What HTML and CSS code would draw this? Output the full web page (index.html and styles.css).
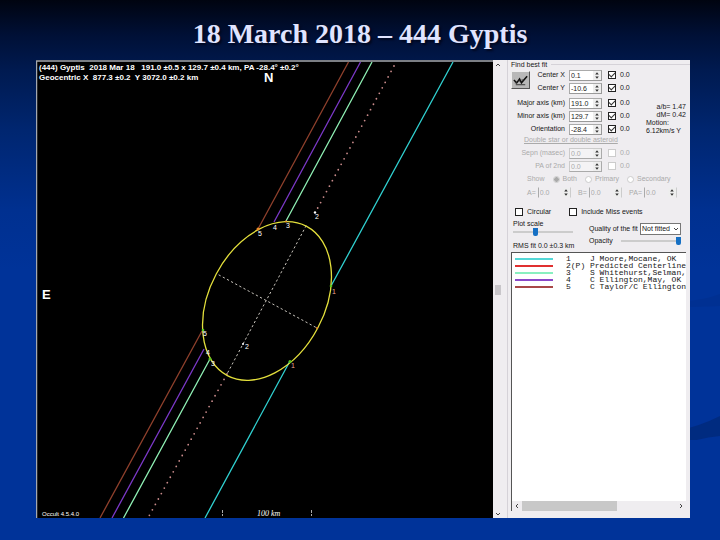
FILE: index.html
```html
<!DOCTYPE html>
<html lang="en">
<head>
<meta charset="utf-8">
<title>18 March 2018 – 444 Gyptis</title>
<link rel="stylesheet" href="styles.css">
</head>
<body>
<svg class="swoosh" viewBox="0 0 40 200" aria-hidden="true">
  <path d="M0 62 Q25 60 40 54 V66 Q20 67 0 67Z" fill="#002d8c" opacity=".5"/>
  <path d="M0 190 Q20 186 40 176 V196 Q20 198 0 205Z" fill="#002b80"/>
</svg>
<h1>18 March 2018 – 444 Gyptis</h1>
<main class="window">
  <svg class="plot" viewBox="36 60 457 458" role="img" aria-label="Occultation chords and fitted ellipse">
    <rect x="36" y="60" width="457" height="458" fill="#000"/>
    <path d="M36.500 518V61H493" fill="none" stroke="#a4a8b0" stroke-width="1.500"/>
    <g fill="none" stroke-width="1.300">
      <path stroke="#8f402c" d="M348.500 62L258 229M202 331L100 518"/>
      <path stroke="#7b38c8" d="M360.500 62L274 222M204 349L112 518"/>
      <path stroke="#8ff0b4" d="M372 62L286 221M210 359L123.500 518"/>
      <path stroke="#30d0d0" d="M453 62L331 286M290 361L205 518"/>
    </g>
    <g fill="none" stroke-linecap="round">
      <path stroke="#c88a8a" stroke-width="1.800" stroke-dasharray="0 6.200" d="M394 66L315 213M227 374L149 516"/>
      <path stroke="#c8c4bc" stroke-width="1" stroke-dasharray="1.500 3.200" d="M306 226L227 374M219 275L317 328"/>
    </g>
    <ellipse cx="267" cy="301" rx="57.500" ry="84.500" transform="rotate(28 267 301)" fill="none" stroke="#e4e03c" stroke-width="1.300"/>
    <g fill="#58c820">
      <circle cx="331" cy="286" r="1.300"/><circle cx="290" cy="361.500" r="1.500"/>
      <circle cx="203" cy="330" r="1.300"/><circle cx="210" cy="359" r="1.500"/>
    </g>
    <g fill="#f08a28"><circle cx="258" cy="229" r="1.500"/><circle cx="286" cy="221.500" r="1"/><circle cx="317" cy="328" r="1"/></g>
    <g fill="#fff"><circle cx="315" cy="212.500" r="1.200"/><circle cx="243" cy="344" r="1"/></g>
    <g class="mark">
      <text x="258" y="236">5</text><text x="273" y="230">4</text><text x="286" y="228">3</text><text x="315" y="219">2</text>
      <text x="203" y="336">5</text><text x="206" y="355">4</text><text x="211" y="366">3</text><text x="245" y="349">2</text>
      <text class="warm" x="332" y="294">1</text><text class="warm" x="291" y="368">1</text>
    </g>
    <g class="caption">
      <text x="39" y="70" xml:space="preserve">(444) Gyptis  2018 Mar 18   191.0 ±0.5 x 129.7 ±0.4 km, PA -28.4° ±0.2°</text>
      <text x="39" y="80" xml:space="preserve">Geocentric X  877.3 ±0.2  Y 3072.0 ±0.2 km</text>
    </g>
    <g class="compass"><text x="264" y="82">N</text><text x="42" y="299">E</text></g>
    <g class="foot">
      <text x="42" y="516">Occult 4.5.4.0</text><text class="scale" x="257" y="516">100 km</text>
    </g>
    <path d="M222.500 510V516M311.500 510V516" stroke="#aaa" stroke-dasharray="3 1"/>
  </svg>

  <div class="vscroll">
    <svg viewBox="0 0 6 4"><path d="M1 3L3 1L5 3"/></svg>
    <span class="vthumb"></span>
    <svg viewBox="0 0 6 4"><path d="M1 1L3 3L5 1"/></svg>
  </div>

  <form class="panel">
    <div class="legend"><span>Find best fit</span></div>
    <div class="fit">
      <button class="plotbtn" type="button" aria-label="Fit"><svg viewBox="0 0 18 16"><path d="M2 8L5 11L8 7L10 11L16 4" fill="none" stroke="#111" stroke-width="1.600"/><path d="M3 11h2M7 9h2M10 8h2M4 13h10" stroke="#333"/></svg></button>
      <div class="fields">
        <div class="field"><label for="cx">Center X</label><span class="spin"><input id="cx" value="0.1"><svg viewBox="0 0 7 10"><path d="M1.500 4L3.500 1.500L5.500 4ZM1.500 6L3.500 8.500L5.500 6Z"/></svg></span><label class="tick"><input type="checkbox" checked>0.0</label></div>
        <div class="field gap"><label for="cy">Center Y</label><span class="spin"><input id="cy" value="-10.6"><svg viewBox="0 0 7 10"><path d="M1.500 4L3.500 1.500L5.500 4ZM1.500 6L3.500 8.500L5.500 6Z"/></svg></span><label class="tick"><input type="checkbox" checked>0.0</label></div>
        <div class="field"><label for="ma">Major axis (km)</label><span class="spin"><input id="ma" value="191.0"><svg viewBox="0 0 7 10"><path d="M1.500 4L3.500 1.500L5.500 4ZM1.500 6L3.500 8.500L5.500 6Z"/></svg></span><label class="tick"><input type="checkbox" checked>0.0</label></div>
        <div class="field"><label for="mi">Minor axis (km)</label><span class="spin"><input id="mi" value="129.7"><svg viewBox="0 0 7 10"><path d="M1.500 4L3.500 1.500L5.500 4ZM1.500 6L3.500 8.500L5.500 6Z"/></svg></span><label class="tick"><input type="checkbox" checked>0.0</label></div>
        <div class="field"><label for="or">Orientation</label><span class="spin"><input id="or" value="-28.4"><svg viewBox="0 0 7 10"><path d="M1.500 4L3.500 1.500L5.500 4ZM1.500 6L3.500 8.500L5.500 6Z"/></svg></span><label class="tick"><input type="checkbox" checked>0.0</label></div>
        <div class="double">Double star or double asteroid</div>
        <div class="field off"><label for="se">Sepn (masec)</label><span class="spin"><input id="se" value="0.0" disabled><svg viewBox="0 0 7 10"><path d="M1.500 4L3.500 1.500L5.500 4ZM1.500 6L3.500 8.500L5.500 6Z"/></svg></span><label class="tick"><input type="checkbox" disabled>0.0</label></div>
        <div class="field off"><label for="pa">PA of 2nd</label><span class="spin"><input id="pa" value="0.0" disabled><svg viewBox="0 0 7 10"><path d="M1.500 4L3.500 1.500L5.500 4ZM1.500 6L3.500 8.500L5.500 6Z"/></svg></span><label class="tick"><input type="checkbox" disabled>0.0</label></div>
      </div>
      <div class="notes"><p class="right">a/b= 1.47<br>dM= 0.42</p><p>Motion:<br>6.12km/s Y</p></div>
    </div>
    <div class="show off"><span>Show</span><label><input type="radio" name="s" checked disabled>Both</label><label><input type="radio" name="s" disabled>Primary</label><label><input type="radio" name="s" disabled>Secondary</label></div>
    <div class="abc off">
      <label>A=<span class="spin"><input value="0.0" disabled><svg viewBox="0 0 7 10"><path d="M1.500 4L3.500 1.500L5.500 4ZM1.500 6L3.500 8.500L5.500 6Z"/></svg></span></label>
      <label>B=<span class="spin"><input value="0.0" disabled><svg viewBox="0 0 7 10"><path d="M1.500 4L3.500 1.500L5.500 4ZM1.500 6L3.500 8.500L5.500 6Z"/></svg></span></label>
      <label>PA=<span class="spin"><input value="0.0" disabled><svg viewBox="0 0 7 10"><path d="M1.500 4L3.500 1.500L5.500 4ZM1.500 6L3.500 8.500L5.500 6Z"/></svg></span></label>
    </div>
    <div class="options"><label><input type="checkbox">Circular</label><label><input type="checkbox">Include Miss events</label></div>
    <div class="tuning">
      <div class="left">
        <label for="ps">Plot scale</label>
        <input id="ps" type="range" value="36">
        <output>RMS fit 0.0 ±0.3 km</output>
      </div>
      <div class="rightcol">
        <div class="row"><label for="q">Quality of the fit</label><span class="pick"><select id="q"><option>Not fitted</option></select><svg viewBox="0 0 6 4"><path d="M1 1L3 3L5 1"/></svg></span></div>
        <div class="row"><label for="op">Opacity</label><input id="op" type="range" value="100"></div>
      </div>
    </div>
    <div class="list">
      <table>
        <tr><td><i class="key cyan"></i></td><td>1</td><td>J Moore,Mocane, OK</td></tr>
        <tr><td><i class="key red"></i></td><td>2(P)</td><td>Predicted Centerline</td></tr>
        <tr><td><i class="key mint"></i></td><td>3</td><td>S Whitehurst,Selman,</td></tr>
        <tr><td><i class="key violet"></i></td><td>4</td><td>C Ellington,May, OK</td></tr>
        <tr><td><i class="key brown"></i></td><td>5</td><td>C Taylor/C Ellington</td></tr>
      </table>
      <div class="hscroll">
        <svg viewBox="0 0 4 6"><path d="M3 1L1 3L3 5"/></svg>
        <span class="htrack"><span class="hthumb"></span></span>
        <svg viewBox="0 0 4 6"><path d="M1 1L3 3L1 5"/></svg>
      </div>
    </div>
  </form>
</main>
</body>
</html>
```
FILE: styles.css
```css
* { box-sizing: border-box; }
html { min-height: 100%; background: #003399; }
body {
  margin: 0;
  padding: 14px 30px 22px 36px;
  background: linear-gradient(#000410 0, #001036 35px, #001a50 70px, #002670 130px, #003090 210px, #003399 270px);
  font: 7px/8px "Liberation Sans Narrow", "Liberation Sans", sans-serif;
  color: #161616;
}
h1 {
  margin: 0;
  padding-bottom: 6px;
  font: bold 28px/40px "Liberation Serif", serif;
  padding-right: 6px;
  color: #e0e4ff;
  text-align: center;
  text-shadow: 2px 2px 2px #000820;
}
.swoosh { position: absolute; right: 0; top: 240px; width: 40px; height: 200px; }
.window {
  position: relative;
  display: grid;
  grid-template-columns: minmax(0, 1fr) 14px 183px;
  background: #efedf0;
}
.plot { display: block; width: 100%; }
.plot text { fill: #fff; }
.caption { font: bold 8px "Liberation Sans Narrow", "Liberation Sans", sans-serif; }
.compass { font: bold 13px "Liberation Sans", sans-serif; }
.mark { font: 7px "Liberation Sans", sans-serif; }
.plot .warm { fill: #f0a890; }
.foot { font: 6px "Liberation Sans Narrow", "Liberation Sans", sans-serif; }
.plot .scale { font-family: "Liberation Serif", serif; font-style: italic; font-size: 8px; }

.vscroll { display: flex; flex-direction: column; justify-content: space-between; padding: 3px 2px 2px; }
.vscroll svg { width: 6px; height: 4px; }
.vscroll svg path, .hscroll path, .pick path { fill: none; stroke: #444; stroke-width: 1px; }
.vthumb { width: 6px; height: 10px; background: #c8c6ca; }

.panel { display: flex; flex-direction: column; min-width: 0; border-left: 1px solid #d5d2d8; }
.legend { display: flex; align-items: center; gap: 4px; height: 9px; padding-left: 3px; }
.legend::after { content: ""; flex: 1; height: 1px; background: #d5d2d8; }
.fit { display: flex; height: 104px; padding-left: 3px; }
.plotbtn {
  flex: none;
  width: 19px;
  height: 18px;
  margin-top: 2px;
  padding: 0;
  border: 1px solid;
  border-color: #eee #555 #555 #eee;
  background: #b8b8b8;
}
.plotbtn svg { display: block; width: 17px; height: 16px; }
.fields { display: flex; flex-direction: column; width: 100px; margin-left: -6px; }
.field { display: grid; grid-template-columns: 41px 33px 24px; column-gap: 4px; align-items: center; height: 12px; margin-bottom: 1px; white-space: nowrap; }
.field > label:first-child { justify-self: end; }
.field.gap { margin-bottom: 3px; }
.double { height: 11px; color: #aaa; text-decoration: underline; white-space: nowrap; }
.spin { display: flex; width: 33px; height: 11px; border: 1px solid; border-color: #aaa #999 #999 #aaa; background: #fff; }
.spin input { flex: 1; min-width: 0; padding: 0 0 0 1px; border: 0; background: transparent; font: 7px/9px "Liberation Sans Narrow", "Liberation Sans", sans-serif; color: #222; }
.spin svg { flex: none; width: 8px; height: 9px; background: #eee; fill: #333; }
.tick { display: flex; align-items: center; gap: 4px; margin-left: 2px; }
input[type="checkbox"] {
  appearance: none;
  flex: none;
  width: 8px;
  height: 8px;
  margin: 0;
  border: 1px solid #222;
  background: #fff;
}
input[type="checkbox"]:checked::before { content: ""; display: block; width: 5px; height: 3px; border: solid #333; border-width: 0 0 1px 1px; transform: rotate(-45deg); }
.off, .off input, .off .spin input { color: #aaa; }
.off .spin { border-color: #ccc #aaa #aaa #ccc; background: #f4f3f5; }
.off input[type="checkbox"] { border-color: #ccc; }
.notes { flex: 1; padding: 34px 4px 0 0; }
.notes p { margin: 0; padding-left: 22px; white-space: nowrap; }
.notes .right { padding: 0; text-align: right; }
.show { display: flex; gap: 8px; align-items: center; height: 12px; padding-left: 19px; }
.show label { display: flex; align-items: center; gap: 3px; }
input[type="radio"] { appearance: none; width: 7px; height: 7px; margin: 0; border: 1px solid #ccc; border-radius: 50%; background: #fff; }
input[type="radio"]:checked { background: radial-gradient(#aaa 0 2px, #fff 3px); }
.abc { display: flex; justify-content: space-between; margin: 2px 13px 8px 19px; }
.abc label { display: flex; align-items: center; gap: 2px; }
.abc .spin { border-color: transparent #ccc transparent #aaa; background: transparent; }
.options { display: flex; gap: 18px; height: 12px; padding-left: 7px; }
.options label { display: flex; align-items: center; gap: 4px; }
.tuning { display: grid; grid-template-columns: 76px 1fr; padding-left: 5px; height: 34px; }
.left { display: flex; flex-direction: column; padding-top: 2px; }
.left output { padding-top: 6px; }
input[type="range"] { appearance: none; width: 60px; height: 8px; margin: 0; background: linear-gradient(#ccc, #ccc) center / 100% 2px no-repeat; }
input[type="range"]::-webkit-slider-thumb { appearance: none; width: 5px; height: 8px; border-radius: 0 0 2px 2px; background: #1670c4; }
.rightcol { padding: 5px 9px 0 0; }
.row { display: flex; align-items: center; justify-content: space-between; height: 12px; white-space: nowrap; }
.pick { display: grid; width: 41px; height: 12px; }
.pick > * { grid-area: 1 / 1; }
.pick select { appearance: none; min-width: 0; padding: 0 1px; border: 1px solid #777; border-radius: 0; background: #fff; font: inherit; color: inherit; }
.pick svg { justify-self: end; align-self: center; width: 6px; height: 4px; margin-right: 2px; }
.list { display: flex; flex: 1; flex-direction: column; margin: 0 4px 7px 3px; border: solid #555; border-width: 1px 0 0 1px; background: #fff; overflow: hidden; }
table { border-collapse: collapse; table-layout: fixed; width: 100%; margin-top: 2px; font: 8px/7px "Liberation Mono", monospace; }
td { height: 7px; padding: 0; white-space: nowrap; }
td:first-child { width: 54px; padding-left: 3px; }
td:nth-child(2) { width: 24px; }
.key { display: block; width: 38px; height: 2px; }
.cyan { background: #54d8d8; }
.red { background: #e03030; }
.mint { background: #88f0c0; }
.violet { background: #8a48c8; }
.brown { background: #a84848; }
.hscroll { display: flex; align-items: center; gap: 3px; height: 10px; margin-top: auto; padding: 0 3px; background: #efedf0; }
.hscroll svg { flex: none; width: 4px; height: 6px; }
.htrack { flex: 1; height: 10px; }
.hthumb { display: block; width: 62%; height: 10px; background: #c8c8c8; }
```
